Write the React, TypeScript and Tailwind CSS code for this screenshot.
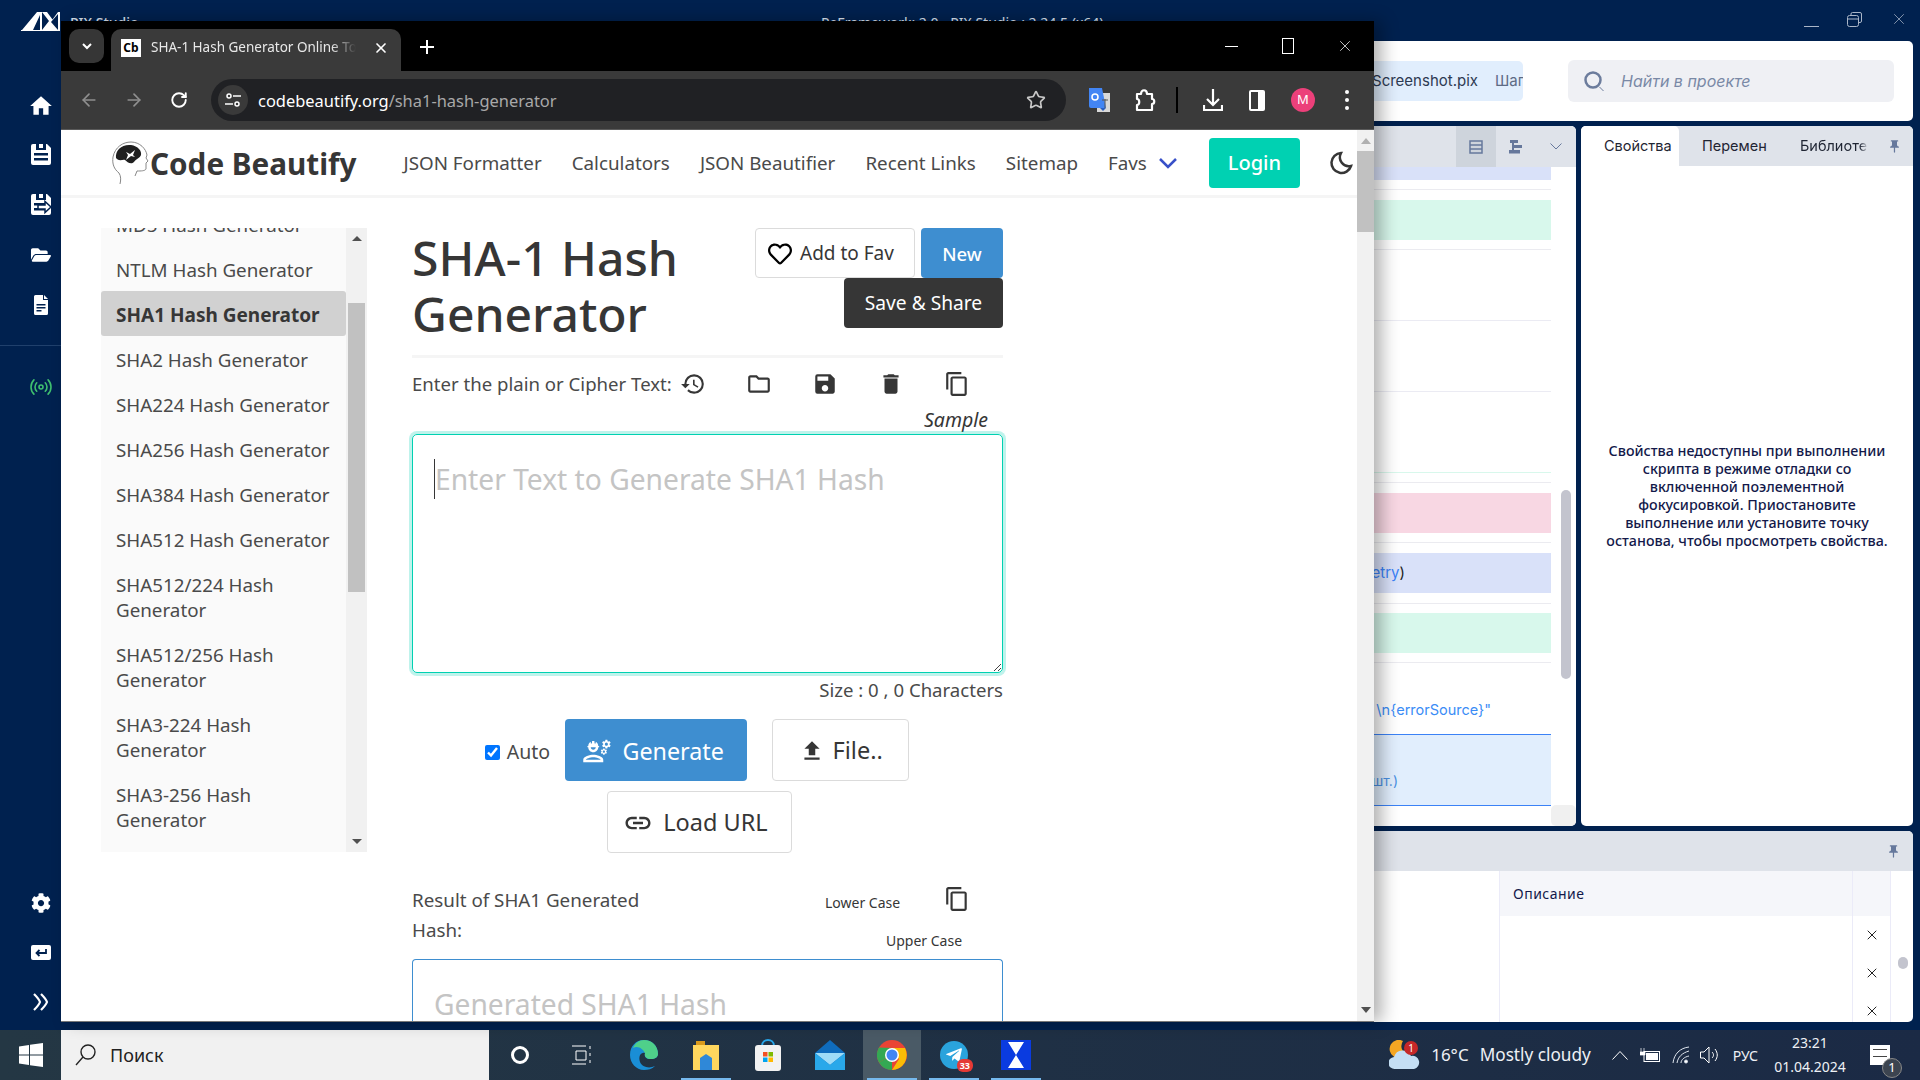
import { ArrowLeft, ArrowRight, Radio, RotateCw, Star, X } from "lucide-react";
import type { ReactNode } from "react";
import { FaCog, FaFolderOpen, FaRegHeart, FaTelegramPlane } from "react-icons/fa";
import {
  MdContentCopy,
  MdDelete,
  MdFileUpload,
  MdHistory,
  MdHome,
  MdLink,
  MdOutlineEngineering,
  MdOutlineFolder,
  MdPushPin,
  MdSave,
} from "react-icons/md";

function SaveIcon({ arrow }: { arrow?: boolean }) {
  return (
    <svg width="20" height="21" viewBox="0 0 20 21" fill="#fff">
      <path d="M2 0h3v6h10V0h1l4 4v15a2 2 0 0 1-2 2H2a2 2 0 0 1-2-2V2a2 2 0 0 1 2-2z" />
      <rect x="8" y="0" width="4" height="4" />
      <rect x="3" y="9" width="14" height="2.5" fill="#00214f" />
      <rect x="3" y="14" width="14" height="2.5" fill="#00214f" />
      {arrow && <path d="M7 11h7V7.500l6 5.500-6 5.500V15H7z" stroke="#00214f" strokeWidth="1.500" />}
    </svg>
  );
}

function AppSidebar() {
  return (
    <div className="flex w-[61px] shrink-0 flex-col items-center pl-[20px] text-white">
      <div className="mt-[12px] flex h-[19px] w-[39px] shrink-0 bg-white">
        <svg width="39" height="19" viewBox="0 0 39 19">
          <path d="M0 0h16L1 18H0zM19 3v15h-7zM21 0l7 9-7 9zM26 0h11l-5.500 7.500zM30 10l7-8v16z" fill="#00214f" />
        </svg>
      </div>
      <MdHome className="mt-[62px] shrink-0" size={26} />
      <div className="mt-[25px] shrink-0"><SaveIcon /></div>
      <div className="mt-[29px] shrink-0"><SaveIcon arrow /></div>
      <FaFolderOpen className="mt-[30px] shrink-0" size={20} />
      <svg className="mt-[30px] shrink-0" width="14" height="20" viewBox="0 0 14 20" fill="#fff">
        <path d="M1.5 0H9v5h5v13.5a1.5 1.5 0 0 1-1.5 1.5h-11A1.5 1.5 0 0 1 0 18.500v-17A1.500 1.500 0 0 1 1.500 0zM10 0l4 4h-4z" />
        <rect x="2.500" y="9" width="9" height="1.500" fill="#00214f" />
        <rect x="2.500" y="12" width="9" height="1.500" fill="#00214f" />
        <rect x="2.500" y="15" width="5" height="1.500" fill="#00214f" />
      </svg>
      <div className="mt-[30px] -ml-[20px] h-px w-[61px] shrink-0 bg-[#20406c]" />
      <Radio className="mt-[29px] shrink-0 text-[#3fc06f]" size={24} strokeWidth={1.6} />
      <FaCog className="mt-auto shrink-0" size={20} />
      <svg className="mt-[32px] shrink-0" width="20" height="15" viewBox="0 0 20 15">
        <rect width="20" height="15" rx="2" fill="#fff" />
        <path d="M15 4v4H6M8.500 5 5.500 8l3 3" fill="none" stroke="#00214f" strokeWidth="1.800" />
      </svg>
      <svg className="mt-[33px] mb-[19px] shrink-0" width="16" height="18" viewBox="0 0 16 18" fill="none" stroke="#fff" strokeWidth="2.200">
        <path d="M1 1c3 3 5 5 6 8-1 3-3 5-6 8M8 1c3 3 5 5 6 8-1 3-3 5-6 8" />
      </svg>
    </div>
  );
}

function EditorRows() {
  return (
    <div className="flex flex-1">
      <div className="flex flex-1 flex-col text-[15px] font-['Inter',sans-serif]">
        <div className="h-[13px] bg-[#d9e1f9]" />
        <div className="mt-[9px] h-[1px] bg-[#ebebf0]" />
        <div className="mt-[10px] h-[40px] bg-[#d8f8ec]" />
        <div className="mt-[9px] h-[1px] bg-[#ebebf0]" />
        <div className="mt-[70px] h-[1px] bg-[#ebebf3]" />
        <div className="mt-[70px] h-[1px] bg-[#ebebf3]" />
        <div className="mt-[80px] h-[1px] bg-[#d8f8ec]" />
        <div className="mt-[9px] h-[1px] bg-[#ebebf0]" />
        <div className="mt-[10px] h-[40px] bg-[#f8d7e3]" />
        <div className="mt-[9px] h-[1px] bg-[#ebebf0]" />
        <div className="mt-[10px] flex h-[40px] items-center justify-end bg-[#d9e1f9] pr-[146px] text-[#3b82f6]">
          <span>etry<span className="text-[#222]">)</span></span>
        </div>
        <div className="mt-[10px] h-[1px] bg-[#ebebf0]" />
        <div className="mt-[9px] h-[40px] bg-[#d8f8ec]" />
        <div className="mt-[9px] h-[1px] bg-[#ebebf0]" />
        <div className="mt-[36px] flex h-[20px] justify-end pr-[60px] text-[14.500px] whitespace-nowrap text-[#3b8cf6]">\n{"{errorSource}"}"</div>
        <div className="mt-[15px] flex h-[72px] items-end justify-end border-y border-[#3b82f6] bg-[#e1eefd] pr-[153px] pb-[14px] text-[14px] text-[#4a90e2]">шт.)</div>
      </div>
      <div className="flex w-[25px] shrink-0 flex-col">
        <div className="mt-[323px] ml-[10px] h-[189px] w-[10px] rounded-full bg-[#c3c4ce]" />
        <div className="mt-auto h-[21px] rounded-[5px] bg-[#f0f0f0]" />
      </div>
    </div>
  );
}

function BackgroundApp() {
  return (
    <div className="flex min-h-0 flex-1">
      <AppSidebar />
      <div className="flex flex-1 flex-col pr-[7px]">
        <div className="relative flex h-[41px] shrink-0 items-center justify-end text-[#dfe6f2]">
          <span className="absolute top-[12px] left-[9px] text-[14px] font-medium whitespace-nowrap">PIX Studio</span>
          <span className="absolute top-[12px] left-[760px] text-[14px] whitespace-nowrap">PeFramework: 2.0 - PIX Studio : 2.24.5 (x64)</span>
          <div className="mr-[5px] flex items-center gap-[28px] pb-[3px] text-[#aab6c8]">
            <div className="mt-[14px] h-px w-[15px] bg-[#aab6c8]" />
            <svg width="15" height="15" viewBox="0 0 15 15" fill="none" stroke="currentColor"><rect x="0.500" y="3.500" width="11" height="11" rx="2" /><path d="M4 3V2a1.500 1.500 0 0 1 1.500-1.500H13A1.500 1.500 0 0 1 14.500 2v7A1.500 1.500 0 0 1 13 10.500h-1M.5 7h11" /></svg>
            <X size={18} strokeWidth={1} />
          </div>
        </div>
        <div className="flex h-[80px] shrink-0 items-center justify-end rounded-[5px] bg-white pr-[19px] font-['Inter',sans-serif]">
          <div className="mr-[45px] flex h-[40px] items-center gap-[17px] rounded-[5px] bg-[#e1eefd] pr-0 pl-[2px] text-[15px] text-[#2e3a52]">
            <span>Screenshot.pix</span>
            <span className="w-[28px] overflow-hidden text-[#5d6b85]">Шаг</span>
          </div>
          <div className="flex h-[42px] w-[326px] items-center gap-[16px] rounded-[6px] bg-[#eff0f4] pl-[16px] text-[16px] text-[#7a89a6] italic">
            <svg width="21" height="21" viewBox="0 0 21 21" fill="none" stroke="#6c7c9c"><circle cx="9" cy="9" r="7.500" strokeWidth="2.500" /><path d="m15.500 16 4 4" strokeWidth="1" /></svg>
            Найти в проекте
          </div>
        </div>
        <div className="mt-[5px] flex h-[700px] shrink-0 gap-[5px]">
          <div className="flex flex-1 flex-col rounded-[5px] bg-white">
            <div className="flex h-[41px] shrink-0 items-stretch justify-end rounded-t-[5px] bg-[#dfe3ea] text-[#66789c]">
              <div className="flex w-[40px] items-center justify-center bg-[#ced4dc]">
                <svg width="14" height="14" viewBox="0 0 14 14" fill="none" stroke="currentColor" strokeWidth="1.500"><rect x="1" y="1" width="12" height="12" /><path d="M1 5h12M1 9h12" /></svg>
              </div>
              <div className="flex w-[40px] items-center justify-center">
                <svg width="14" height="14" viewBox="0 0 14 14" fill="currentColor"><rect x="1" y="0" width="8" height="3" /><rect x="3" y="3" width="2" height="8" /><rect x="4" y="5" width="9" height="3" /><rect x="0" y="10" width="11" height="3.500" /></svg>
              </div>
              <div className="flex w-[40px] items-center justify-center">
                <svg width="12" height="7" viewBox="0 0 12 7" fill="none" stroke="currentColor"><path d="m.5.500 5.500 5.500 5.500-5.500" /></svg>
              </div>
            </div>
            <EditorRows />
          </div>
          <div className="flex w-[332px] shrink-0 flex-col rounded-[5px] bg-white">
            <div className="flex h-[40px] shrink-0 items-center rounded-t-[5px] bg-[#dfe3ea] text-[14.500px] text-[#1f2533] font-['Inter',sans-serif]">
              <div className="flex h-full w-[98px] items-center rounded-t-[5px] bg-white pl-[23px]">Свойства</div>
              <span className="ml-[23px] w-[70px] overflow-hidden">Перемен</span>
              <span className="ml-[28px] w-[68px] overflow-hidden whitespace-nowrap [mask-image:linear-gradient(to_right,black_88%,transparent)]">Библиотека</span>
              <MdPushPin className="ml-[19px] text-[#66789c]" size={15} />
            </div>
            <p className="mt-[276px] px-[17px] text-center text-[14.250px] leading-[18px] font-medium text-[#13194a]">
              Свойства недоступны при выполнении скрипта в режиме отладки со включенной поэлементной фокусировкой. Приостановите выполнение или установите точку останова, чтобы просмотреть свойства.
            </p>
          </div>
        </div>
        <div className="mt-[5px] flex h-[191px] shrink-0 flex-col overflow-hidden rounded-[5px] bg-white">
          <div className="flex h-[40px] shrink-0 items-center justify-end bg-[#dfe3ea] pr-[12px] text-[#66789c]">
            <MdPushPin size={15} />
          </div>
          <div className="flex flex-1 pr-[22px]">
            <div className="flex-1" />
            <div className="flex w-[354px] flex-col border-x border-[#ebebf8]">
              <div className="flex h-[45px] items-center bg-[#f5f6fa] pl-[13px] text-[14px] tracking-[0.5px] text-[#13194a]">Описание</div>
            </div>
            <div className="flex w-[38px] flex-col items-center border-r border-[#ebebf8] pt-[9px]">
              <div className="-mt-[9px] h-[45px] w-full shrink-0 bg-[#f5f6fa]" />
              <X className="mt-[11px] shrink-0 text-[#222]" size={16} strokeWidth={1.500} />
              <X className="mt-[22px] shrink-0 text-[#222]" size={16} strokeWidth={1.500} />
              <X className="mt-[22px] shrink-0 text-[#222]" size={16} strokeWidth={1.500} />
            </div>
          </div>
          <div className="absolute top-[957px] left-[1898px] h-[12px] w-[10px] rounded-full bg-[#c3c4ce]" />
        </div>
      </div>
    </div>
  );
}

const listItems = [
  "MD5 Hash Generator",
  "NTLM Hash Generator",
  "SHA1 Hash Generator",
  "SHA2 Hash Generator",
  "SHA224 Hash Generator",
  "SHA256 Hash Generator",
  "SHA384 Hash Generator",
  "SHA512 Hash Generator",
  "SHA512/224 Hash Generator",
  "SHA512/256 Hash Generator",
  "SHA3-224 Hash Generator",
  "SHA3-256 Hash Generator",
];

function ToolList() {
  return (
    <div className="flex h-[624px] w-[266px] shrink-0 overflow-hidden bg-[#fafafa]">
      <div className="-mt-[27px] w-[245px] shrink-0">
        {listItems.map((item) => (
          <div
            key={item}
            className={
              item.startsWith("SHA1 ")
                ? "rounded-[3px] bg-[#d1d1d1] px-[15px] pt-[12px] pb-[8px] text-[19px] leading-[25px] font-bold text-[#363636]"
                : "pt-[12px] pr-[5px] pb-[8px] pl-[15px] text-[18.800px] leading-[25px] text-[#4a4a4a]"
            }
          >
            {item}
          </div>
        ))}
      </div>
      <div className="relative flex w-[21px] shrink-0 flex-col items-center bg-[#f1f1f1]">
        <div className="mt-[8px] h-0 w-0 border-x-[5px] border-b-[5px] border-x-transparent border-b-[#505050]" />
        <div className="mt-[62px] h-[289px] w-[17px] bg-[#c1c1c1]" />
        <div className="mt-auto mb-[8px] h-0 w-0 border-x-[5px] border-t-[5px] border-x-transparent border-t-[#505050]" />
      </div>
    </div>
  );
}

function ToolForm() {
  return (
    <div className="ml-[45px] w-[591px] shrink-0 text-[#4a4a4a]">
      <div className="flex justify-between">
        <h1 className="w-[300px] pt-[2px] text-[48px] leading-[56px] font-medium text-[#363636]">SHA-1 Hash Generator</h1>
        <div className="flex w-[248px] flex-wrap content-start justify-end">
          <button className="flex h-[50px] w-[160px] items-center gap-[8px] rounded-[4px] border border-[#dbdbdb] bg-white pt-[1px] pl-[12px] text-[19px] text-[#363636]">
            <FaRegHeart className="text-black" size={24} />
            Add to Fav
          </button>
          <button className="ml-[6px] h-[50px] w-[82px] rounded-[4px] bg-[#3e8ed0] pt-[1px] text-[18.500px] font-medium text-white">New</button>
          <button className="h-[50px] w-[159px] rounded-[4px] bg-[#363636] pt-[1px] text-[19.200px] text-white">Save &amp; Share</button>
        </div>
      </div>
      <div className="mt-[13px] h-[3px] bg-[#f5f5f5]" />
      <div className="mt-[12px] flex h-[28px] items-center text-[18.600px] leading-[28px]">
        <span className="w-[268px] whitespace-nowrap">Enter the plain or Cipher Text:</span>
        <div className="flex gap-[40px] text-[#363636]">
          <MdHistory size={26} />
          <MdOutlineFolder size={26} />
          <MdSave size={26} />
          <MdDelete size={26} />
          <MdContentCopy size={26} />
        </div>
      </div>
      <div className="mt-[8px] pr-[15px] text-right text-[19.500px] leading-[28px] text-[#363636] italic">Sample</div>
      <div className="relative h-[239px] rounded-[5px] border border-[#00d1b2] shadow-[0_0_0_3px_rgba(0,209,178,0.25)]">
        <div className="mt-[24px] ml-[21px] flex h-[40px] items-center border-l border-[#363636] text-[28.200px] text-[#c4c4c4]">Enter Text to Generate SHA1 Hash</div>
        <svg className="absolute right-0 bottom-0" width="11" height="11" viewBox="0 0 11 11" stroke="#444"><path d="M3 10 10 3M7 10l3-3" /></svg>
      </div>
      <div className="mt-[3px] text-right text-[18.600px] leading-[28px]">Size : 0 , 0 Characters</div>
      <div className="mt-[15px] flex flex-wrap justify-center pr-[21px]">
        <label className="mt-[19px] mr-[15px] flex h-[28px] items-center gap-[7px] text-[19.500px]">
          <input type="checkbox" defaultChecked className="h-[15px] w-[15px] accent-[#0075ff]" />
          Auto
        </label>
        <button className="flex h-[62px] w-[182px] items-center justify-center gap-[10px] rounded-[4px] bg-[#3e8ed0] pt-[2px] pr-[6px] text-[23.300px] text-white">
          <MdOutlineEngineering size={30} />
          Generate
        </button>
        <button className="ml-[25px] flex h-[62px] w-[137px] items-center justify-center gap-[8px] rounded-[4px] border border-[#dbdbdb] bg-white pt-[2px] text-[23.500px] text-[#363636]">
          <MdFileUpload size={26} />
          File..
        </button>
        <div className="mt-[10px] flex w-full justify-center">
          <button className="ml-[5px] flex h-[62px] w-[185px] items-center justify-center gap-[10px] rounded-[4px] border border-[#dbdbdb] bg-white pt-[2px] pr-[8px] text-[23.500px] text-[#363636]">
            <MdLink size={30} />
            Load URL
          </button>
        </div>
      </div>
      <div className="mt-[32px] flex h-[74px]">
        <div className="w-[300px]">
          <p className="w-[250px] text-[18.800px] leading-[30px]">Result of SHA1 Generated Hash:</p>
        </div>
        <div className="relative flex-1 text-[14px] text-[#363636]">
          <span className="absolute top-[7px] left-[113px] whitespace-nowrap">Lower Case</span>
          <MdContentCopy className="absolute top-[1px] left-[232px]" size={26} />
          <span className="absolute top-[45px] left-[174px] whitespace-nowrap">Upper Case</span>
        </div>
      </div>
      <div className="h-[62px] rounded-t-[4px] border border-b-0 border-[#3e8ed0] pt-[24px] pl-[21px] text-[28.200px] leading-[40px] text-[#c4c4c4]">Generated SHA1 Hash</div>
    </div>
  );
}

function ChromeBar() {
  return (
    <>
      <div className="flex h-[50px] shrink-0 items-end bg-black pl-[8px] text-white">
        <div className="mb-[8px] flex h-[34px] w-[35px] items-center justify-center rounded-[10px] bg-[#363636]">
          <svg width="10" height="7" viewBox="0 0 10 7" fill="none" stroke="#fff" strokeWidth="2"><path d="m1 1 4 4 4-4" /></svg>
        </div>
        <div className="ml-[7px] flex h-[42px] w-[290px] items-center rounded-t-[10px] bg-[#3a3a3a] pb-[5px] pl-[10px]">
          <div className="flex h-[18px] w-[20px] items-center justify-center bg-white text-[12px] font-bold text-black">Cb</div>
          <span className="ml-[10px] w-[205px] overflow-hidden text-[13.500px] whitespace-nowrap text-[#e8e8e8] [mask-image:linear-gradient(to_right,black_88%,transparent)]">SHA-1 Hash Generator Online Tool</span>
          <X className="ml-[17px]" size={16} strokeWidth={2.500} />
        </div>
        <svg className="mb-[17px] ml-[19px]" width="14" height="14" viewBox="0 0 14 14" stroke="#fff" strokeWidth="2"><path d="M7 0v14M0 7h14" /></svg>
        <div className="mb-[16px] ml-auto flex items-center pr-[20px]">
          <div className="h-px w-[13px] bg-white" />
          <div className="ml-[44px] h-[16px] w-[12px] border border-white" />
          <X className="ml-[42px]" size={18} strokeWidth={1} />
        </div>
      </div>
      <div className="flex h-[59px] shrink-0 items-center border-b border-[#5a5a5a] bg-[#3a3a3a] text-white">
        <ArrowLeft className="ml-[18px] text-[#8f8f8f]" size={20} />
        <ArrowRight className="ml-[25px] text-[#8f8f8f]" size={20} />
        <RotateCw className="ml-[26px]" size={18} strokeWidth={2.500} />
        <div className="ml-[23px] flex h-[42px] w-[855px] items-center rounded-full bg-[#202124] pl-[7px]">
          <div className="flex h-[30px] w-[30px] items-center justify-center rounded-full bg-[#3a3a3a]">
            <svg width="16" height="14" viewBox="0 0 16 14" fill="none" stroke="#fff" strokeWidth="1.500"><circle cx="4" cy="3" r="2" /><path d="M8 3h8M0 11h8" /><circle cx="12" cy="11" r="2" /></svg>
          </div>
          <span className="ml-[10px] pt-[2px] text-[16.450px] whitespace-nowrap text-white">codebeautify.org<span className="text-[#a8a8a8]">/sha1-hash-generator</span></span>
          <Star className="mr-[20px] ml-auto text-[#c8c8c8]" size={20} strokeWidth={2} />
        </div>
        <svg className="ml-[23px]" width="21" height="24" viewBox="0 0 21 24"><rect x="8" y="5" width="13" height="19" fill="#d8d8d8" /><path d="M0 0h13l4 20H2a2 2 0 0 1-2-2z" fill="#4285f4" /><path d="M11 20h6l-3 3z" fill="#2a5fc0" /><circle cx="6" cy="9" r="3" fill="none" stroke="#fff" strokeWidth="1.500" /><path d="M13 12h6M16 11v9" stroke="#555" /></svg>
        <svg className="ml-[24px]" width="22" height="24" viewBox="0 0 22 24" fill="none" stroke="#fff" strokeWidth="2.200"><path d="M3 6h4c0-5 6-5 6 0h5v5c3 0 3 5 0 5v6H3v-5c3 0 3-6 0-6z" strokeLinejoin="round" /></svg>
        <div className="ml-[20px] h-[26px] w-[2px] bg-black" />
        <svg className="ml-[25px]" width="20" height="24" viewBox="0 0 20 24" fill="none" stroke="#fff" strokeWidth="2.200"><path d="M10 1v15M4 11l6 6 6-6M1 17v5h18v-5" /></svg>
        <svg className="ml-[25px]" width="18" height="23" viewBox="0 0 18 23"><rect x="1" y="1" width="16" height="21" rx="2" fill="#fff" /><rect x="3" y="3" width="7" height="17" fill="#3a3a3a" /></svg>
        <div className="ml-[25px] flex h-[24px] w-[24px] items-center justify-center rounded-full bg-[#ec407a] text-[13px]">M</div>
        <div className="ml-[30px] flex flex-col gap-[4px]">
          <div className="h-[4px] w-[4px] rounded-full bg-white" />
          <div className="h-[4px] w-[4px] rounded-full bg-white" />
          <div className="h-[4px] w-[4px] rounded-full bg-white" />
        </div>
      </div>
    </>
  );
}

const navItems = ["JSON Formatter", "Calculators", "JSON Beautifier", "Recent Links", "Sitemap"];

function PageHeader() {
  return (
    <div className="flex h-[68px] shrink-0 items-center border-b-[3px] border-[#f5f5f5] pl-[51px] text-[18.800px] text-[#4a4a4a]">
      <svg width="37" height="44" viewBox="0 0 37 44" className="shrink-0">
        <path d="M8 43c1-4 1-8-1-11C2 28 0 23 1 16 3 6 11 1 19 1c9 0 15 7 16 13l-1 3 2 3-2 2v6c-1 2-5 2-9 2l-2 5" fill="none" stroke="#888" />
        <path d="M4 17C3 9 10 3 19 4c7 1 11 6 10 10-1 3-5 4-7 7-3 3-7 0-9-2-2-1-6 2-9-2z" fill="#1f1f1f" />
        <path d="m14 11 4 2 5-4-2 5 2 2-4-1-5 4 2-5z" fill="#fff" />
      </svg>
      <span className="mt-[3px] ml-[1px] text-[29.700px] whitespace-nowrap font-bold text-[#363636]">Code Beautify</span>
      <div className="mt-[2px] ml-[47px] flex gap-[30px] whitespace-nowrap">
        {navItems.map((item) => (
          <span key={item}>{item}</span>
        ))}
        <span className="flex items-center gap-[12px]">
          Favs
          <svg width="18" height="11" viewBox="0 0 18 11" fill="none" stroke="#3850c8" strokeWidth="2.500"><path d="m1 1 8 8 8-8" /></svg>
        </span>
      </div>
      <button className="ml-[32px] h-[50px] w-[91px] rounded-[4px] bg-[#00d1b2] pt-[1px] text-[20px] font-medium text-white">Login</button>
      <svg className="ml-[29px] shrink-0" width="24" height="24" viewBox="0 0 24 24" fill="none" stroke="#363636" strokeWidth="2.500"><path d="M12 2a10 10 0 1 0 10 13A9 9 0 0 1 12 2z" /></svg>
    </div>
  );
}

function BrowserWindow() {
  return (
    <div className="absolute top-[21px] left-[61px] flex h-[1001px] w-[1313px] flex-col overflow-hidden border-b border-[#777] shadow-[8px_0_16px_rgba(0,0,0,0.3)]">
      <ChromeBar />
      <div className="relative min-h-0 flex-1 bg-white">
        <PageHeader />
        <div className="flex pt-[30px] pl-[40px]">
          <ToolList />
          <ToolForm />
        </div>
        <div className="absolute top-0 right-0 bottom-0 flex w-[17px] flex-col items-center bg-[#f1f1f1]">
          <div className="mt-[8px] h-0 w-0 border-x-[5px] border-b-[6px] border-x-transparent border-b-[#b0b0b0]" />
          <div className="mt-[7px] h-[81px] w-full bg-[#c1c1c1]" />
          <div className="mt-auto mb-[8px] h-0 w-0 border-x-[5px] border-t-[6px] border-x-transparent border-t-[#505050]" />
        </div>
      </div>
    </div>
  );
}

function TaskSlot({ running, children }: { running?: boolean; children: ReactNode }) {
  return (
    <div className="relative flex h-full w-[62px] shrink-0 items-center justify-center">
      {children}
      {running && <div className="absolute inset-x-[6px] bottom-0 h-[2px] bg-[#76b9ed]" />}
    </div>
  );
}

function Taskbar() {
  return (
    <div className="flex h-[50px] shrink-0 items-center bg-gradient-to-r from-[#243744] to-[#1b2a45] text-white">
      <div className="flex w-[61px] justify-center">
        <svg width="24" height="24" viewBox="0 0 24 24" fill="#fff"><path d="M0 3.500 10 2v9.500H0zM11 1.800 24 0v11.500H11zM0 12.500h10V22L0 20.500zM11 12.500h13V24l-13-1.800z" /></svg>
      </div>
      <div className="flex h-full w-[428px] shrink-0 items-center bg-[#f1f1f1] pl-[14px] text-[18px] text-[#222]">
        <svg width="22" height="22" viewBox="0 0 22 22" fill="none" stroke="#222" strokeWidth="1.400"><circle cx="13" cy="8" r="7" /><path d="M8 13 1 21" /></svg>
        <span className="ml-[13px]">Поиск</span>
      </div>
      <TaskSlot><div className="h-[18px] w-[18px] rounded-full border-[3px] border-white" /></TaskSlot>
      <TaskSlot>
        <svg width="20" height="20" viewBox="0 0 20 20" fill="none" stroke="#fff"><path d="M0 1h14M4 6h10v9H4zM0 19h14M18 1v3M18 8v3M18 15v3" /></svg>
      </TaskSlot>
      <TaskSlot>
        <svg width="28" height="30" viewBox="0 0 28 30">
          <path d="M14 0c8 0 14 6 14 14 0 3-3 5-7 5-5 0-7-2-6-6-4-1-7 3-5 9 2 5 9 7 15 4-3 3-7 4-11 4C6 30 0 23 0 15 0 6 6 0 14 0z" fill="#1a8ed6" />
          <path d="M14 0c8 0 14 6 14 14 0 3-3 5-7 5s-7-2-6-6C13 9 8 5 3 8c2-5 6-8 11-8z" fill="#4fd08a" />
        </svg>
      </TaskSlot>
      <TaskSlot running>
        <svg width="28" height="29" viewBox="0 0 26 29"><path d="M3 0h9v5H3z" fill="#d99a1c" /><rect y="4" width="26" height="25" fill="#ffd75e" /><path d="M7 29V17l6-4 6 4v12z" fill="#2f88d8" /></svg>
      </TaskSlot>
      <TaskSlot>
        <svg width="26" height="32" viewBox="0 0 26 32"><path d="M7 7c0-8 12-8 12 0" fill="none" stroke="#27a5e8" strokeWidth="2" /><rect y="6" width="26" height="26" rx="3" fill="#f2f2f2" /><rect x="8" y="13" width="4.500" height="4.500" fill="#f25022" /><rect x="13.500" y="13" width="4.500" height="4.500" fill="#7fba00" /><rect x="8" y="18.500" width="4.500" height="4.500" fill="#00a4ef" /><rect x="13.500" y="18.500" width="4.500" height="4.500" fill="#ffb900" /></svg>
      </TaskSlot>
      <TaskSlot>
        <svg width="30" height="30" viewBox="0 0 30 30"><path d="M15 0 30 13v17H0V13z" fill="#0f6cbd" /><path d="M0 13h30L15 25z" fill="#9fdcf8" /><path d="M0 30V13l15 12 15-12v17z" fill="#29a8ea" /></svg>
      </TaskSlot>
      <TaskSlot running>
        <div className="absolute inset-y-0 inset-x-[2px] bg-[#4a5a66]" />
        <svg className="relative" width="30" height="30" viewBox="0 0 30 30">
          <circle cx="15" cy="15" r="15" fill="#ea4335" />
          <path d="M15 15 2 22.500A15 15 0 0 0 15 30z" fill="#34a853" />
          <path d="M2 7.500A15 15 0 0 0 2 22.500L8 19 15 8z" fill="#34a853" />
          <path d="M15 8h13a15 15 0 0 1-13 22l7-11z" fill="#fbbc05" />
          <circle cx="15" cy="15" r="7" fill="#fff" />
          <circle cx="15" cy="15" r="5.500" fill="#4285f4" />
        </svg>
      </TaskSlot>
      <TaskSlot running>
        <div className="relative flex h-[28px] w-[28px] items-center justify-center rounded-full bg-[#2aa3dc]">
          <FaTelegramPlane size={18} />
          <div className="absolute -right-[5px] -bottom-[3px] rounded-[6px] bg-[#e53935] px-[3px] text-[9px] leading-[13px] font-bold">33</div>
        </div>
      </TaskSlot>
      <TaskSlot running>
        <div className="flex h-[30px] w-[30px] items-center justify-center bg-[#0a3be0]">
          <svg width="16" height="26" viewBox="0 0 16 26" fill="#fff"><path d="M0 0h16L8 13l8 13H0L8 13z" /></svg>
        </div>
      </TaskSlot>
      <div className="ml-auto flex items-center pr-[30px]">
        <svg width="32" height="30" viewBox="0 0 32 30">
          <path d="M14 1a9 9 0 1 0 3 13A9 9 0 0 1 14 1z" fill="#f5a623" />
          <path d="M6 29a6 6 0 0 1-1-12 9 9 0 0 1 17-1 6.500 6.500 0 0 1 3 13z" fill="#c4def4" />
          <circle cx="22" cy="8" r="7" fill="#c62828" />
          <text x="22" y="11.500" textAnchor="middle" fontSize="10" fill="#fff">1</text>
        </svg>
        <span className="ml-[10px] text-[17px] whitespace-nowrap text-[#eef1f5]">16°C</span>
        <span className="ml-[11px] text-[17.200px] whitespace-nowrap text-[#eef1f5]">Mostly cloudy</span>
        <svg className="ml-[21px]" width="16" height="9" viewBox="0 0 16 9" fill="none" stroke="#fff"><path d="m.5 8.500 7.500-8 7.500 8" /></svg>
        <svg className="ml-[12px]" width="20" height="14" viewBox="0 0 20 14"><path d="M1 0v4M4 0v4M0 4h5v3H0z" fill="#fff" stroke="#fff" strokeWidth="0.700" /><rect x="4" y="3.500" width="15.500" height="10" fill="none" stroke="#fff" /><rect x="6" y="5" width="12" height="7" fill="#fff" /></svg>
        <svg className="ml-[12px]" width="18" height="18" viewBox="0 0 18 18" fill="none" stroke="#dfe6ee"><path d="M1 17C2 8 8 2 17 1M5 17c1-6 5-10 12-12M9 17c0-3 3-6 8-7" /><circle cx="14" cy="15.500" r="1.500" fill="#fff" /></svg>
        <svg className="ml-[10px]" width="20" height="18" viewBox="0 0 20 18" fill="none" stroke="#fff"><path d="M.5 6h3.500L9 1v16l-5-5H.5zM12 6c2 2 2 4 0 6M15 3c3 4 3 8 0 12" /></svg>
        <span className="ml-[13px] text-[14px] text-[#eef1f5]">РУС</span>
        <div className="ml-[17px] flex w-[70px] flex-col items-center text-[14px] leading-[24px] text-[#eef1f5]">
          <span>23:21</span>
          <span>01.04.2024</span>
        </div>
        <div className="relative ml-[25px] h-[20px] w-[20px] bg-white">
          <div className="mx-[3px] mt-[4px] h-[8px] border-y border-[#444]" />
          <div className="absolute -right-[12px] -bottom-[13px] flex h-[20px] w-[20px] items-center justify-center rounded-full border border-[#888] bg-[#3c4450] text-[13px]">1</div>
        </div>
      </div>
    </div>
  );
}

export default function App() {
  return (
    <div className="relative flex h-[1080px] w-[1920px] flex-col overflow-hidden bg-[#00214f] font-['Noto_Sans',sans-serif]">
      <BackgroundApp />
      <Taskbar />
      <BrowserWindow />
    </div>
  );
}
